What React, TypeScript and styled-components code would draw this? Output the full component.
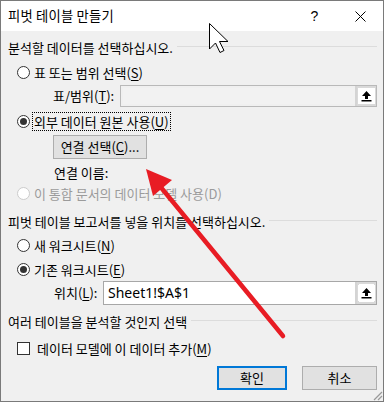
import React from "react";
import styled, { createGlobalStyle } from "styled-components";

const Global = createGlobalStyle`
  html, body { margin: 0; padding: 0; background: #ffffff; }
  body { font-family: "Noto Sans CJK KR", "Noto Sans", sans-serif; font-size: 13px; color: #000; }
  * { box-sizing: border-box; }
`;

const Dialog = styled.div`
  position: relative;
  width: 384px;
  height: 402px;
  border: 1px solid #7a7a7a;
  background: #f0f0f0;
  display: flex;
  flex-direction: column;
  overflow: hidden;
`;

const TitleBar = styled.div`
  height: 30px;
  background: #ffffff;
  display: flex;
  align-items: center;
  padding-left: 7px;
  flex-shrink: 0;
`;

const TitleText = styled.div`
  font-size: 13.3px;
  line-height: 16px;
  flex: 1;
  letter-spacing: 0.2px;
`;

const TitleButton = styled.div<{ $w: number }>`
  width: ${(p) => p.$w}px;
  height: 30px;
  display: flex;
  align-items: center;
  justify-content: center;
  font-family: "Liberation Sans", "Noto Sans", sans-serif;
  font-size: 14px;
`;

const Body = styled.div`
  flex: 1;
  display: flex;
  flex-direction: column;
  padding: 0 6px 0 7px;
`;

const Section = styled.div<{ $top: number }>`
  margin-top: ${(p) => p.$top}px;
  height: 16px;
  display: flex;
  align-items: center;
  line-height: 16px;
  white-space: nowrap;
`;

const SectionLine = styled.div`
  flex: 1;
  height: 1px;
  background: #dcdcdc;
  margin-left: 4px;
  margin-top: -3px;
`;

const Row = styled.div<{ $top: number; $indent?: number; $h?: number }>`
  margin-top: ${(p) => p.$top}px;
  margin-left: ${(p) => p.$indent ?? 0}px;
  height: ${(p) => p.$h ?? 16}px;
  display: flex;
  align-items: center;
  line-height: 16px;
  white-space: nowrap;
`;

const RadioCircle = styled.span<{ $checked?: boolean; $disabled?: boolean }>`
  width: 13px;
  height: 13px;
  border-radius: 50%;
  border: 1px solid ${(p) => (p.$disabled ? "#cccccc" : "#333333")};
  background: #ffffff;
  margin-left: 9px;
  margin-right: 4px;
  display: inline-flex;
  align-items: center;
  justify-content: center;
  flex-shrink: 0;
  &::after {
    content: "";
    display: ${(p) => (p.$checked ? "block" : "none")};
    width: 7px;
    height: 7px;
    border-radius: 50%;
    background: #333333;
  }
`;

const CheckBox = styled.span`
  width: 13px;
  height: 13px;
  border: 1px solid #333333;
  background: #ffffff;
  margin-left: 9px;
  margin-right: 7px;
  flex-shrink: 0;
`;

const Label = styled.span<{ $disabled?: boolean; $focus?: boolean }>`
  color: ${(p) => (p.$disabled ? "#9b9b9b" : "#000")};
  outline: ${(p) => (p.$focus ? "1px dotted #000" : "none")};
  padding: 0 1px;
  margin-left: -1px;
  height: 17px;
  line-height: 17px;
`;

const U = styled.span`
  text-decoration: underline;
  text-underline-offset: 2px;
`;

const FieldLabel = styled.span<{ $w: number }>`
  width: ${(p) => p.$w}px;
  flex-shrink: 0;
`;

const Field = styled.div<{ $disabled?: boolean; $h: number }>`
  flex: 1;
  height: ${(p) => p.$h}px;
  border: 1px solid ${(p) => (p.$disabled ? "#b9b9b9" : "#a7a7a7")};
  background: ${(p) => (p.$disabled ? "#f0f0f0" : "#ffffff")};
  display: flex;
  align-items: stretch;
`;

const FieldText = styled.div<{ $disabled?: boolean }>`
  flex: 1;
  margin: ${(p) => (p.$disabled ? "2px 0 2px 2px" : "0")};
  background: ${(p) => (p.$disabled ? "#f2f2f2" : "transparent")};
  padding-left: 4px;
  display: flex;
  align-items: center;
  font-family: "Noto Sans", "Liberation Sans", sans-serif;
  font-size: 14px;
`;

const PickButton = styled.div`
  width: 21px;
  border-left: 2px solid #d4d4d4;
  background: #ffffff;
  display: flex;
  align-items: center;
  justify-content: center;
  box-shadow: inset 0 0 0 2px #d9d9d9;
`;

const PickInner = styled.div`
  width: 17px;
  height: 16px;
  background: #ffffff;
  display: flex;
  align-items: center;
  justify-content: center;
`;

const PushButton = styled.button<{ $w: number; $primary?: boolean }>`
  width: ${(p) => p.$w}px;
  height: 24px;
  background: #e1e1e1;
  border: ${(p) => (p.$primary ? "2px solid #0078d7" : "1px solid #adadad")};
  font-family: "Noto Sans CJK KR", "Noto Sans", sans-serif;
  font-size: 13px;
  color: #000;
  padding: 0;
  display: flex;
  align-items: center;
  justify-content: center;
  line-height: 16px;
`;

const ButtonRow = styled.div`
  margin-top: 10px;
  display: flex;
  justify-content: flex-end;
  gap: 15px;
`;

const Overlay = styled.svg`
  position: absolute;
  left: 0;
  top: 0;
  pointer-events: none;
`;

const Grip = styled.svg`
  position: absolute;
  right: 0;
  bottom: 0;
`;

const PickIcon = () => (
  <svg width="11" height="12" viewBox="0 0 11 12">
    <polygon points="5.5,1 10,6 7,6 7,9 4,9 4,6 1,6" fill="#000" />
    <rect x="0.5" y="10" width="10" height="1.5" fill="#000" />
  </svg>
);

const Picker = () => (
  <PickButton>
    <PickInner>
      <PickIcon />
    </PickInner>
  </PickButton>
);

export default function App() {
  return (
    <>
      <Global />
      <Dialog>
        <TitleBar>
          <TitleText>피벗 테이블 만들기</TitleText>
          <TitleButton $w={45}>?</TitleButton>
          <TitleButton $w={46}>
            <svg width="11" height="11" viewBox="0 0 11 11">
              <path d="M0.5 0.5 L10.5 10.5 M10.5 0.5 L0.5 10.5" stroke="#000" strokeWidth="1" />
            </svg>
          </TitleButton>
        </TitleBar>
        <Body>
          <Section $top={9}>
            분석할 데이터를 선택하십시오.
            <SectionLine />
          </Section>
          <Row $top={8}>
            <RadioCircle />
            <Label>
              표 또는 범위 선택(<U>S</U>)
            </Label>
          </Row>
          <Row $top={5} $indent={45} $h={22}>
            <FieldLabel $w={67}>
              표/범위(<U>T</U>):
            </FieldLabel>
            <Field $disabled $h={22}>
              <FieldText $disabled />
              <Picker />
            </Field>
          </Row>
          <Row $top={6} $h={17}>
            <RadioCircle $checked />
            <Label $focus>
              외부 데이터 원본 사용(<U>U</U>)
            </Label>
          </Row>
          <Row $top={5} $indent={45} $h={24}>
            <PushButton $w={94}>
              연결 선택(<U>C</U>)...
            </PushButton>
          </Row>
          <Row $top={6} $indent={46}>
            연결 이름:
          </Row>
          <Row $top={4}>
            <RadioCircle $disabled />
            <Label $disabled>이 통합 문서의 데이터 모델 사용(D)</Label>
          </Row>
          <Section $top={13}>
            피벗 테이블 보고서를 넣을 위치를 선택하십시오.
            <SectionLine />
          </Section>
          <Row $top={7}>
            <RadioCircle />
            <Label>
              새 워크시트(<U>N</U>)
            </Label>
          </Row>
          <Row $top={8}>
            <RadioCircle $checked />
            <Label>
              기존 워크시트(<U>E</U>)
            </Label>
          </Row>
          <Row $top={4} $indent={46} $h={24}>
            <FieldLabel $w={49}>
              위치(<U>L</U>):
            </FieldLabel>
            <Field $h={24}>
              <FieldText>Sheet1!$A$1</FieldText>
              <Picker />
            </Field>
          </Row>
          <Section $top={9}>
            여러 테이블을 분석할 것인지 선택
            <SectionLine />
          </Section>
          <Row $top={10}>
            <CheckBox />
            <Label>
              데이터 모델에 이 데이터 추가(<U>M</U>)
            </Label>
          </Row>
          <ButtonRow>
            <PushButton $w={70} $primary>
              확인
            </PushButton>
            <PushButton $w={75}>취소</PushButton>
          </ButtonRow>
        </Body>
        <Grip width="12" height="12" viewBox="0 0 12 12">
          <path d="M11 3 L3 11 M11 7 L7 11" stroke="#9a9a9a" strokeWidth="1.2" />
        </Grip>
        <Overlay width="384" height="402" viewBox="0 0 384 402">
          <line x1="282" y1="335" x2="158" y2="184" stroke="#e81c24" strokeWidth="4.5" strokeLinecap="round" />
          <polygon points="145,168 171,179 152,195" fill="#e81c24" />
          <path
            d="M208.5 22.5 L208.5 48 L214.5 42 L219 51.5 L223 49.5 L218.5 40.5 L227 40.5 Z"
            fill="#ffffff"
            stroke="#000"
            strokeWidth="1"
            strokeLinejoin="miter"
          />
        </Overlay>
      </Dialog>
    </>
  );
}
